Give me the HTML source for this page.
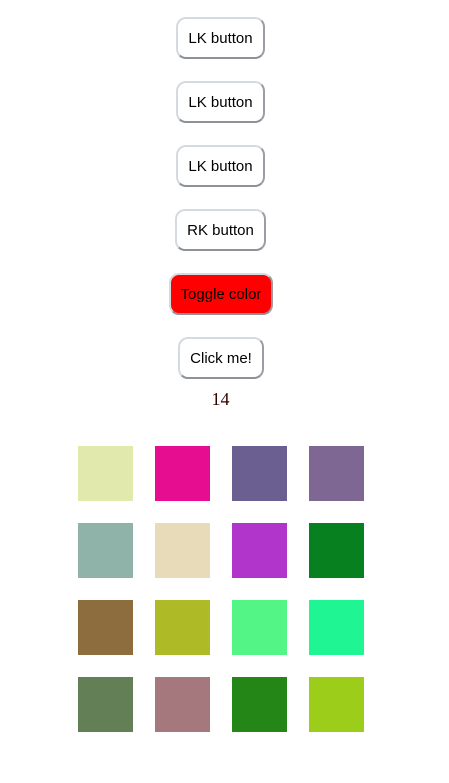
<!DOCTYPE html>
<html><head><meta charset="utf-8"><style>
body{margin:0;width:449px;height:783px;background:#fff;position:relative;font-family:"Liberation Sans",sans-serif}
.b{position:absolute;height:42px;box-sizing:border-box;border:2px solid;border-color:#d5dae0 #9a9ea4 #8e9298 #d5dae0;border-radius:10px;background:#fff;font-size:15px;display:flex;align-items:center;justify-content:center;color:#000}
.s{position:absolute;width:55px;height:55px}
</style></head><body>
<div class="b" style="left:176px;top:17px;width:89px">LK button</div>
<div class="b" style="left:176px;top:81px;width:89px">LK button</div>
<div class="b" style="left:176px;top:145px;width:89px">LK button</div>
<div class="b" style="left:175px;top:209px;width:91px">RK button</div>
<div class="b" style="left:169px;top:273px;width:104px;background:#ff0000">Toggle color</div>
<div class="b" style="left:178px;top:337px;width:86px">Click me!</div>
<div style="position:absolute;left:0;width:441px;top:389px;text-align:center;font-family:'Liberation Serif',serif;font-size:18px;color:#300">14</div>
<div class="s" style="left:78px;top:446px;background:#e1eaac"></div>
<div class="s" style="left:155px;top:446px;background:#e60d91"></div>
<div class="s" style="left:232px;top:446px;background:#6b5e90"></div>
<div class="s" style="left:309px;top:446px;background:#7e6893"></div>
<div class="s" style="left:78px;top:523px;background:#90b3a9"></div>
<div class="s" style="left:155px;top:523px;background:#e8dbb9"></div>
<div class="s" style="left:232px;top:523px;background:#b135ca"></div>
<div class="s" style="left:309px;top:523px;background:#07801f"></div>
<div class="s" style="left:78px;top:600px;background:#8d6c3d"></div>
<div class="s" style="left:155px;top:600px;background:#afbb26"></div>
<div class="s" style="left:232px;top:600px;background:#54f587"></div>
<div class="s" style="left:309px;top:600px;background:#20f594"></div>
<div class="s" style="left:78px;top:677px;background:#637f56"></div>
<div class="s" style="left:155px;top:677px;background:#a4787c"></div>
<div class="s" style="left:232px;top:677px;background:#238616"></div>
<div class="s" style="left:309px;top:677px;background:#9dcd1b"></div>
</body></html>
